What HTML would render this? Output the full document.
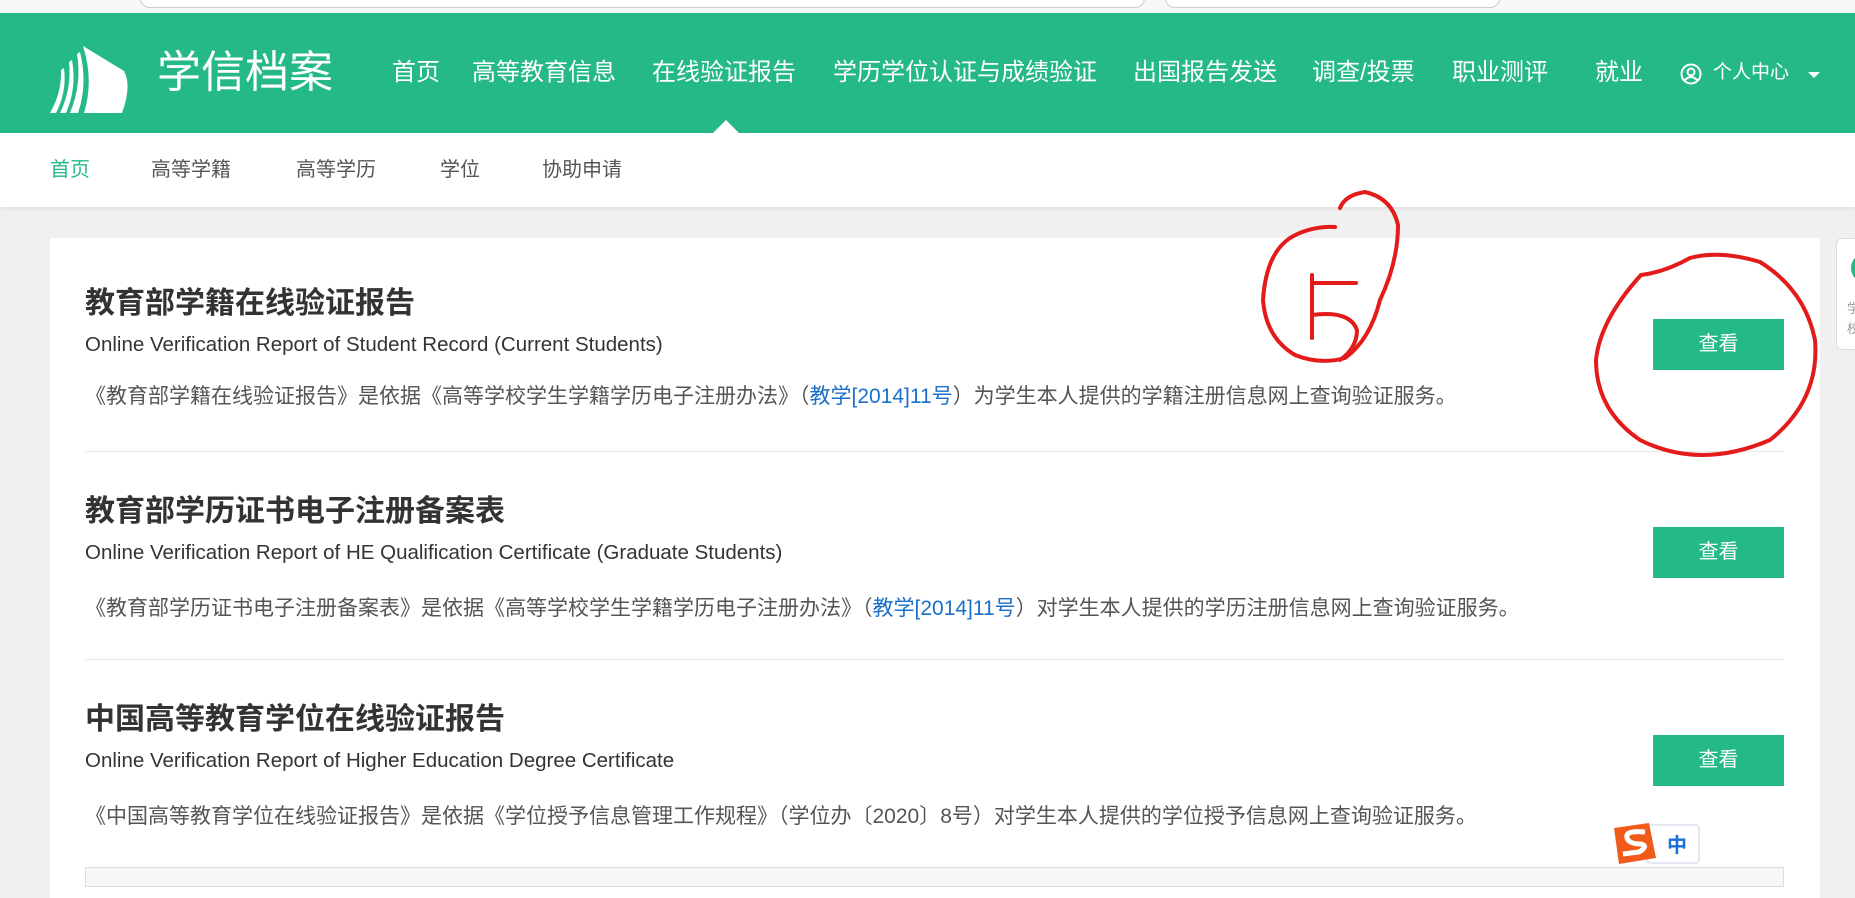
<!DOCTYPE html>
<html><head><meta charset="utf-8">
<style>
*{margin:0;padding:0;box-sizing:border-box}
body{width:1855px;height:880px;overflow:hidden;background:#f0f0f0;font-family:"Liberation Sans","Noto Sans CJK SC",sans-serif;position:relative}
.chrome{position:absolute;left:0;top:0;width:1855px;height:13px;background:#f7f7f7}
.chrome .i1{position:absolute;left:140px;top:-12px;width:1005px;height:20px;border:1px solid #ccc;border-radius:10px;background:#fff}
.chrome .i2{position:absolute;left:1165px;top:-12px;width:335px;height:20px;border:1px solid #ccc;border-radius:10px;background:#fff}
.hdr{position:absolute;left:0;top:13px;width:1855px;height:120px;background:#25b987}
.hdr .t{position:absolute;top:0;line-height:120px;color:#fff;font-size:24px;white-space:nowrap}
.logo{position:absolute;left:157px;top:0;line-height:120px;color:#fff;font-size:44px}
.arrow{position:absolute;left:713px;top:107px;width:0;height:0;border-left:13px solid transparent;border-right:13px solid transparent;border-bottom:13px solid #fff}
.sub{position:absolute;left:0;top:133px;width:1855px;height:74px;background:#fff;box-shadow:0 2px 4px rgba(0,0,0,.06)}
.sub span{position:absolute;top:0;line-height:74px;font-size:20px;color:#555}
.card{position:absolute;left:50px;top:238px;width:1770px;height:660px;background:#fff}
.h{position:absolute;left:85px;font-size:30px;font-weight:bold;color:#333;white-space:nowrap}
.e{position:absolute;left:85px;font-size:20.5px;color:#333;white-space:nowrap}
.d{position:absolute;left:85px;font-size:21px;color:#555;white-space:nowrap}
.d a{color:#1a6fc9;text-decoration:none}
.sep{position:absolute;left:85px;width:1699px;height:1px;background:#e5e5e5}
.btn{position:absolute;left:1653px;width:131px;height:51px;background:#25b987;color:#fff;font-size:20px;text-align:center;line-height:51px}
.gbox{position:absolute;left:85px;top:867px;width:1699px;height:20px;background:#f7f7f7;border:1px solid #ddd}
.side{position:absolute;left:1836px;top:238px;width:30px;height:112px;background:#fff;border:1px solid #ddd;border-radius:6px;overflow:hidden}
</style></head><body>
<div class="chrome"><div class="i1"></div><div class="i2"></div></div>
<div class="hdr">
<svg style="position:absolute;left:50px;top:33px" width="82" height="68" viewBox="0 0 82 68"><path d="M33 0 L74 25 Q82 40 72 67 L34 67 Q44 34 33 0Z" fill="#fff"/><path d="M27 8 Q32 38 20 67 L28 67 Q38 38 30 6Z" fill="#fff"/><path d="M19 16 Q22 42 10 67 L16 67 Q27 42 22 14Z" fill="#fff"/><path d="M11 24 Q12 46 0 67 L6 67 Q17 46 14 22Z" fill="#fff"/></svg>
<div class="logo">学信档案</div>
<div class="t" style="left:392px">首页</div>
<div class="t" style="left:472px">高等教育信息</div>
<div class="t" style="left:652px">在线验证报告</div>
<div class="t" style="left:833px">学历学位认证与成绩验证</div>
<div class="t" style="left:1133px">出国报告发送</div>
<div class="t" style="left:1312px">调查/投票</div>
<div class="t" style="left:1452px">职业测评</div>
<div class="t" style="left:1595px">就业</div>
<svg style="position:absolute;left:1680px;top:50px" width="22" height="22" viewBox="0 0 22 22"><circle cx="11" cy="11" r="9.5" fill="none" stroke="#fff" stroke-width="2"/><circle cx="11" cy="9" r="3.5" fill="none" stroke="#fff" stroke-width="2"/><path d="M5 17 Q11 11 17 17" fill="none" stroke="#fff" stroke-width="2"/></svg>
<div class="t" style="left:1713px;font-size:19px">个人中心</div>
<div style="position:absolute;left:1808px;top:59px;border-left:6px solid transparent;border-right:6px solid transparent;border-top:6px solid #fff"></div>
<div class="arrow"></div>
</div>
<div class="sub">
<span style="left:50px;color:#25b987">首页</span>
<span style="left:151px">高等学籍</span>
<span style="left:296px">高等学历</span>
<span style="left:440px">学位</span>
<span style="left:542px">协助申请</span>
</div>
<div class="side"><div style="position:absolute;left:14px;top:14px;width:30px;height:30px;border-radius:50%;background:#25b987"></div><div style="position:absolute;left:10px;top:60px;font-size:13px;color:#999;line-height:20px">学<br>校</div></div>
<div class="card"></div>
<div class="h" style="top:278px">教育部学籍在线验证报告</div>
<div class="e" style="top:333px">Online Verification Report of Student Record (Current Students)</div>
<div class="d" style="top:380px">《教育部学籍在线验证报告》是依据《高等学校学生学籍学历电子注册办法》（<a>教学[2014]11号</a>）为学生本人提供的学籍注册信息网上查询验证服务。</div>
<div class="btn" style="top:319px">查看</div>
<div class="sep" style="top:451px"></div>
<div class="h" style="top:486px">教育部学历证书电子注册备案表</div>
<div class="e" style="top:541px">Online Verification Report of HE Qualification Certificate (Graduate Students)</div>
<div class="d" style="top:592px">《教育部学历证书电子注册备案表》是依据《高等学校学生学籍学历电子注册办法》（<a>教学[2014]11号</a>）对学生本人提供的学历注册信息网上查询验证服务。</div>
<div class="btn" style="top:527px">查看</div>
<div class="sep" style="top:659px"></div>
<div class="h" style="top:694px">中国高等教育学位在线验证报告</div>
<div class="e" style="top:749px">Online Verification Report of Higher Education Degree Certificate</div>
<div class="d" style="top:800px">《中国高等教育学位在线验证报告》是依据《学位授予信息管理工作规程》（学位办〔2020〕8号）对学生本人提供的学位授予信息网上查询验证服务。</div>
<div class="btn" style="top:735px">查看</div>
<div class="gbox"></div>
<svg style="position:absolute;left:1611px;top:818px" width="92" height="46" viewBox="0 0 92 46"><rect x="36" y="7" width="52" height="38" rx="3" fill="#fff" stroke="#c9d6e6"/><text x="56" y="34" font-size="20" font-weight="bold" fill="#1a6fd9" font-family="Noto Sans CJK SC,sans-serif">中</text><path d="M3 10 L38 5 L45 40 L8 46Z" fill="#f05a1a"/><path d="M34 14 Q14 12 16 20 Q18 26 30 26 Q38 28 28 34 L12 36" fill="none" stroke="#fff" stroke-width="5"/></svg>
<svg style="position:absolute;left:0;top:0" width="1855" height="880" viewBox="0 0 1855 880">
<g fill="none" stroke="#e41b1b" stroke-width="4" stroke-linecap="round">
<path d="M1335 227 Q1310 226 1290 238 Q1266 254 1263 300 Q1266 338 1295 355 Q1320 365 1345 358 Q1370 340 1380 300 Q1398 262 1398 225 Q1392 198 1365 192 Q1345 195 1340 208"/>
<path d="M1312 338 L1312 275 M1312 283 L1356 283 M1312 315 Q1350 310 1357 330 Q1357 348 1340 360"/>
<path d="M1641 275 Q1600 320 1596 360 Q1596 410 1640 440 Q1700 470 1770 440 Q1820 400 1815 340 Q1805 290 1760 262 Q1720 250 1690 258 Q1665 272 1641 275"/>
</g></svg>
</body></html>
